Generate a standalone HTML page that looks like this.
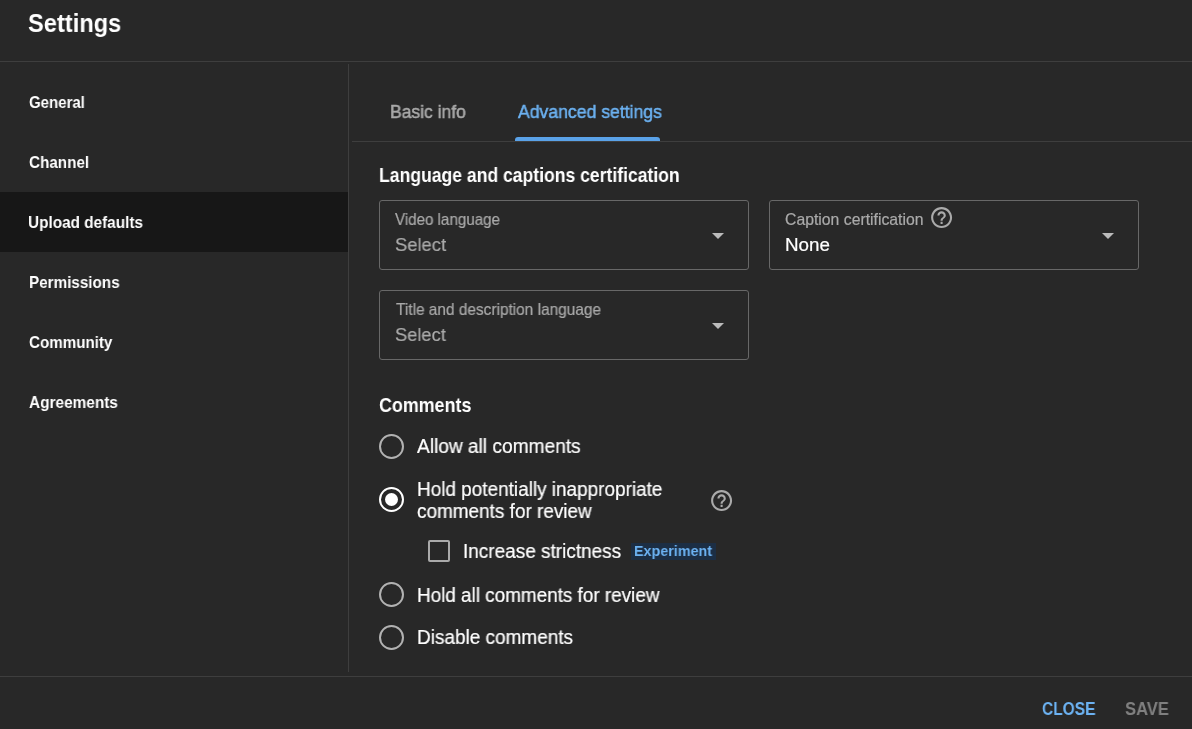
<!DOCTYPE html>
<html><head><meta charset="utf-8"><title>Settings</title>
<style>
html,body{margin:0;padding:0;}
body{width:1192px;height:729px;overflow:hidden;background:#282828;position:relative;font-family:"Liberation Sans",sans-serif;}
.t{position:absolute;line-height:1;white-space:nowrap;transform-origin:0 0;will-change:transform;}
.r{position:absolute;}
</style></head><body>
<div class="r" style="left:0px;top:61px;width:1192px;height:1px;background:#3e3e3e;"></div>
<div class="r" style="left:0px;top:192px;width:348px;height:60px;background:#171717;"></div>
<div class="r" style="left:348px;top:64px;width:1px;height:608px;background:#3e3e3e;"></div>
<div class="r" style="left:352px;top:141px;width:840px;height:1px;background:#3e3e3e;"></div>
<div class="r" style="left:515px;top:137px;width:145px;height:4px;background:#5aa2e8;border-radius:3px 3px 0 0;"></div>
<div class="r" style="left:0px;top:676px;width:1192px;height:1px;background:#3e3e3e;"></div>
<div class="r" style="left:379px;top:200px;width:370px;height:70px;border:1px solid #686868;border-radius:3px;box-sizing:border-box"></div>
<div class="r" style="left:712px;top:232.5px;width:0;height:0;border-left:6px solid transparent;border-right:6px solid transparent;border-top:6px solid #bbb"></div>
<div class="r" style="left:769px;top:200px;width:370px;height:70px;border:1px solid #686868;border-radius:3px;box-sizing:border-box"></div>
<div class="r" style="left:1102px;top:232.5px;width:0;height:0;border-left:6px solid transparent;border-right:6px solid transparent;border-top:6px solid #bbb"></div>
<div class="r" style="left:379px;top:290px;width:370px;height:70px;border:1px solid #686868;border-radius:3px;box-sizing:border-box"></div>
<div class="r" style="left:712px;top:322.5px;width:0;height:0;border-left:6px solid transparent;border-right:6px solid transparent;border-top:6px solid #bbb"></div>
<svg class="r" style="left:928.80px;top:204.80px" width="25.20" height="25.20" viewBox="0 0 24 24"><path fill="#aaa" d="M11 18h2v-2h-2v2zm1-16C6.48 2 2 6.48 2 12s4.48 10 10 10 10-4.48 10-10S17.52 2 12 2zm0 18c-4.41 0-8-3.59-8-8s3.59-8 8-8 8 3.59 8 8-3.59 8-8 8zm0-14c-2.21 0-4 1.79-4 4h2c0-1.1.9-2 2-2s2 .9 2 2c0 2-3 1.75-3 5h2c0-2.25 3-2.5 3-5 0-2.21-1.79-4-4-4z"/></svg>
<svg class="r" style="left:708.80px;top:487.90px" width="25.20" height="25.20" viewBox="0 0 24 24"><path fill="#aaa" d="M11 18h2v-2h-2v2zm1-16C6.48 2 2 6.48 2 12s4.48 10 10 10 10-4.48 10-10S17.52 2 12 2zm0 18c-4.41 0-8-3.59-8-8s3.59-8 8-8 8 3.59 8 8-3.59 8-8 8zm0-14c-2.21 0-4 1.79-4 4h2c0-1.1.9-2 2-2s2 .9 2 2c0 2-3 1.75-3 5h2c0-2.25 3-2.5 3-5 0-2.21-1.79-4-4-4z"/></svg>
<div class="r" style="left:379px;top:433.6px;width:25px;height:25px;border:2px solid #b2b2b2;border-radius:50%;box-sizing:border-box"></div>
<div class="r" style="left:379px;top:486.9px;width:25px;height:25px;border:2px solid #fff;border-radius:50%;box-sizing:border-box"></div>
<div class="r" style="left:385px;top:492.9px;width:13px;height:13px;background:#fff;border-radius:50%"></div>
<div class="r" style="left:379px;top:581.8px;width:25px;height:25px;border:2px solid #b2b2b2;border-radius:50%;box-sizing:border-box"></div>
<div class="r" style="left:379px;top:624.9px;width:25px;height:25px;border:2px solid #b2b2b2;border-radius:50%;box-sizing:border-box"></div>
<div class="r" style="left:428px;top:540px;width:22px;height:22px;border:2px solid #aaa;border-radius:2px;box-sizing:border-box"></div>
<div class="r" style="left:631px;top:543px;width:85px;height:17px;background:#1c2e44;"></div>
<div class="t" style="left:28.49px;top:11px;color:#fff;font-size:25.1px;font-weight:bold;transform:scaleX(0.9420)">Settings</div>
<div class="t" style="left:28.98px;top:95px;color:#fff;font-size:16.86px;font-weight:bold;transform:scaleX(0.8906)">General</div>
<div class="t" style="left:28.88px;top:155px;color:#fff;font-size:16.86px;font-weight:bold;transform:scaleX(0.9040)">Channel</div>
<div class="t" style="left:28.39px;top:215px;color:#fff;font-size:16.86px;font-weight:bold;transform:scaleX(0.9096)">Upload defaults</div>
<div class="t" style="left:28.60px;top:275px;color:#fff;font-size:16.86px;font-weight:bold;transform:scaleX(0.9040)">Permissions</div>
<div class="t" style="left:28.68px;top:335px;color:#fff;font-size:16.86px;font-weight:bold;transform:scaleX(0.8996)">Community</div>
<div class="t" style="left:28.51px;top:395px;color:#fff;font-size:16.86px;font-weight:bold;transform:scaleX(0.9123)">Agreements</div>
<div class="t" style="left:389.74px;top:103px;color:#aaaaaa;font-size:18.3px;-webkit-text-stroke-width:0.5px;transform:scaleX(0.9577)">Basic info</div>
<div class="t" style="left:517.50px;top:103px;color:#6cb2f2;font-size:18.3px;-webkit-text-stroke-width:0.5px;transform:scaleX(0.9631)">Advanced settings</div>
<div class="t" style="left:379.12px;top:165px;color:#fff;font-size:20.06px;font-weight:bold;transform:scaleX(0.8765)">Language and captions certification</div>
<div class="t" style="left:395.31px;top:212px;color:#aaaaaa;font-size:15.75px;-webkit-text-stroke-width:0.2px;transform:scaleX(0.9605)">Video language</div>
<div class="t" style="left:394.74px;top:236px;color:#aaaaaa;font-size:18.75px;-webkit-text-stroke-width:0.2px;transform:scaleX(0.9803)">Select</div>
<div class="t" style="left:785.31px;top:212px;color:#aaaaaa;font-size:15.75px;-webkit-text-stroke-width:0.2px;transform:scaleX(1.0016)">Caption certification</div>
<div class="t" style="left:785.00px;top:236px;color:#fff;font-size:18.75px;-webkit-text-stroke-width:0.2px;transform:scaleX(1.0027)">None</div>
<div class="t" style="left:395.50px;top:302px;color:#aaaaaa;font-size:15.75px;-webkit-text-stroke-width:0.2px;transform:scaleX(0.9785)">Title and description language</div>
<div class="t" style="left:394.95px;top:326px;color:#aaaaaa;font-size:18.75px;-webkit-text-stroke-width:0.2px;transform:scaleX(0.9745)">Select</div>
<div class="t" style="left:378.95px;top:395px;color:#fff;font-size:20.06px;font-weight:bold;transform:scaleX(0.8918)">Comments</div>
<div class="t" style="left:416.82px;top:437px;color:#fff;font-size:19.33px;-webkit-text-stroke-width:0.2px;transform:scaleX(0.9890)">Allow all comments</div>
<div class="t" style="left:416.92px;top:480px;color:#fff;font-size:19.33px;-webkit-text-stroke-width:0.2px;transform:scaleX(0.9803)">Hold potentially inappropriate</div>
<div class="t" style="left:416.91px;top:502px;color:#fff;font-size:19.33px;-webkit-text-stroke-width:0.2px;transform:scaleX(0.9798)">comments for review</div>
<div class="t" style="left:463.29px;top:542px;color:#fff;font-size:19.33px;-webkit-text-stroke-width:0.2px;transform:scaleX(0.9814)">Increase strictness</div>
<div class="t" style="left:633.98px;top:543px;color:#6cb2f2;font-size:15.5px;font-weight:bold;transform:scaleX(0.9240)">Experiment</div>
<div class="t" style="left:416.72px;top:586px;color:#fff;font-size:19.33px;-webkit-text-stroke-width:0.2px;transform:scaleX(0.9770)">Hold all comments for review</div>
<div class="t" style="left:416.72px;top:628px;color:#fff;font-size:19.33px;-webkit-text-stroke-width:0.2px;transform:scaleX(0.9815)">Disable comments</div>
<div class="t" style="left:1042.29px;top:700px;color:#6cb2f2;font-size:18.3px;font-weight:bold;transform:scaleX(0.8494)">CLOSE</div>
<div class="t" style="left:1125.33px;top:700px;color:#808080;font-size:18.3px;font-weight:bold;transform:scaleX(0.9057)">SAVE</div>

</body></html>
